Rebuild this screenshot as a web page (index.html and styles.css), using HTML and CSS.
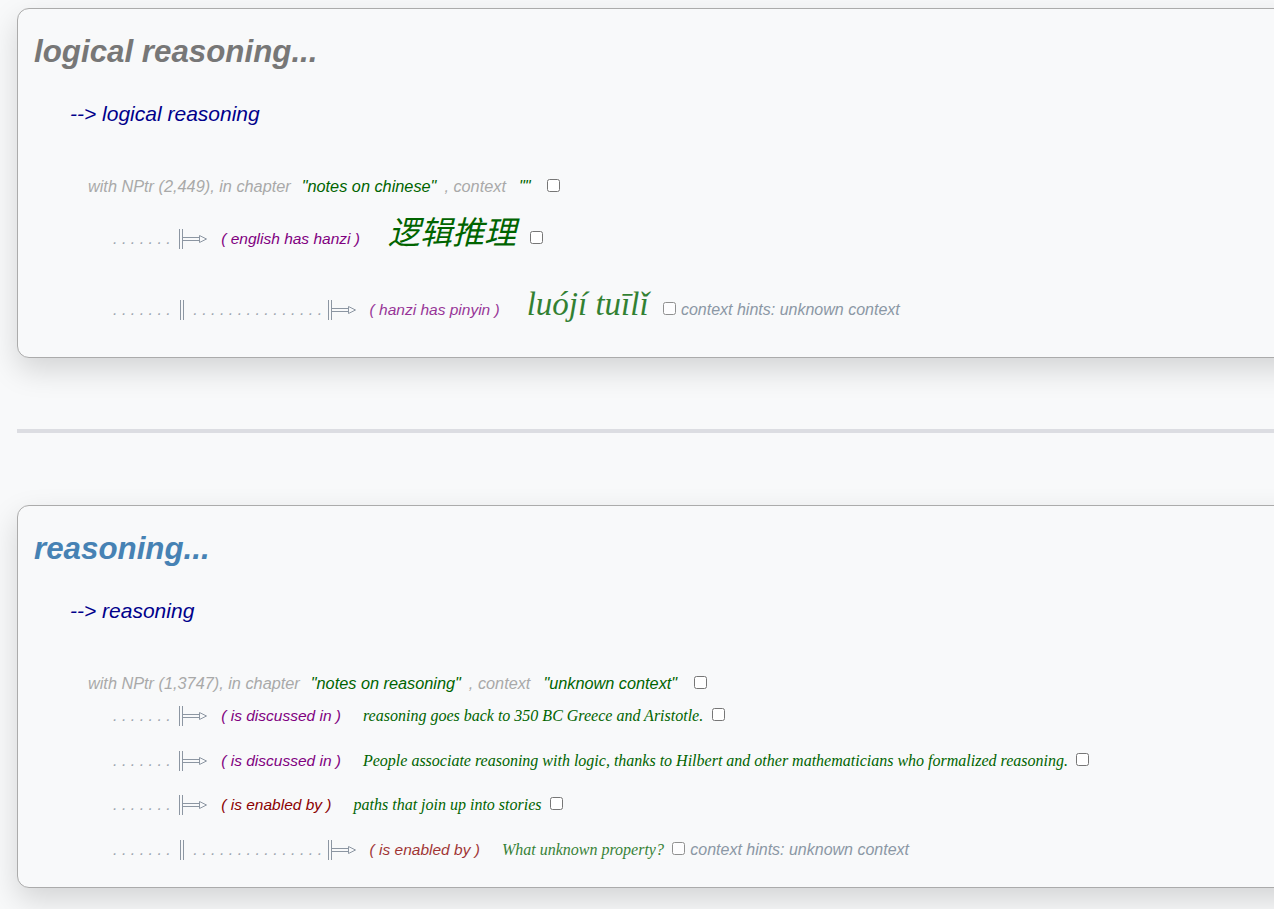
FILE: index.html
```html
<!DOCTYPE html>
<html lang="en">
<head>
<meta charset="utf-8">
<title>reasoning</title>
<link rel="stylesheet" href="styles.css">
</head>
<body>
<main class="page">
  <section class="card">
    <h2 class="title title-gray">logical reasoning...</h2>
    <p class="sub">--&gt; logical reasoning</p>
    <div class="hdr">
      <span class="lbl">with NPtr (2,449), in chapter</span><span class="q">"notes on chinese"</span><span class="lbl ctx">, context</span><span class="q q2">""</span><input type="checkbox" class="cb cb-h">
    </div>
    <div class="row row-cn">
      <span class="dots">. . . . . . . </span><svg class="arr" width="28" height="20" viewBox="0 0 28 20"><path d="M0.5 0V20M3.5 0V20M3.5 8.5H20.5M3.5 11.5H20.5M20.5 6.5L27.5 10L20.5 13.5Z"/></svg><span class="rel purple">( english has hanzi )</span><span class="cn">逻辑推理</span> <input type="checkbox" class="cb">
    </div>
    <div class="row row-py faded">
      <span class="dots">. . . . . . . </span><svg class="bar" width="5" height="20" viewBox="0 0 5 20"><path d="M0.5 0V20M3.5 0V20"/></svg><span class="dots dots2">. . . . . . . . . . . . . . . </span><svg class="arr" width="28" height="20" viewBox="0 0 28 20"><path d="M0.5 0V20M3.5 0V20M3.5 8.5H20.5M3.5 11.5H20.5M20.5 6.5L27.5 10L20.5 13.5Z"/></svg><span class="rel purple">( hanzi has pinyin )</span><span class="py">luójí tuīlǐ</span> <input type="checkbox" class="cb"><span class="hint">context hints: unknown context</span>
    </div>
  </section>

  <hr class="sep">

  <section class="card">
    <h2 class="title title-blue">reasoning...</h2>
    <p class="sub">--&gt; reasoning</p>
    <div class="hdr">
      <span class="lbl">with NPtr (1,3747), in chapter</span><span class="q">"notes on reasoning"</span><span class="lbl ctx">, context</span><span class="q q2">"unknown context"</span><input type="checkbox" class="cb cb-h">
    </div>
    <div class="row row-first">
      <span class="dots">. . . . . . . </span><svg class="arr" width="28" height="20" viewBox="0 0 28 20"><path d="M0.5 0V20M3.5 0V20M3.5 8.5H20.5M3.5 11.5H20.5M20.5 6.5L27.5 10L20.5 13.5Z"/></svg><span class="rel purple">( is discussed in )</span><span class="txt">reasoning goes back to 350 BC Greece and Aristotle.</span> <input type="checkbox" class="cb">
    </div>
    <div class="row">
      <span class="dots">. . . . . . . </span><svg class="arr" width="28" height="20" viewBox="0 0 28 20"><path d="M0.5 0V20M3.5 0V20M3.5 8.5H20.5M3.5 11.5H20.5M20.5 6.5L27.5 10L20.5 13.5Z"/></svg><span class="rel purple">( is discussed in )</span><span class="txt">People associate reasoning with logic, thanks to Hilbert and other mathematicians who formalized reasoning.</span> <input type="checkbox" class="cb">
    </div>
    <div class="row">
      <span class="dots">. . . . . . . </span><svg class="arr" width="28" height="20" viewBox="0 0 28 20"><path d="M0.5 0V20M3.5 0V20M3.5 8.5H20.5M3.5 11.5H20.5M20.5 6.5L27.5 10L20.5 13.5Z"/></svg><span class="rel red">( is enabled by )</span><span class="txt">paths that join up into stories</span> <input type="checkbox" class="cb">
    </div>
    <div class="row faded">
      <span class="dots">. . . . . . . </span><svg class="bar" width="5" height="20" viewBox="0 0 5 20"><path d="M0.5 0V20M3.5 0V20"/></svg><span class="dots dots2">. . . . . . . . . . . . . . . </span><svg class="arr" width="28" height="20" viewBox="0 0 28 20"><path d="M0.5 0V20M3.5 0V20M3.5 8.5H20.5M3.5 11.5H20.5M20.5 6.5L27.5 10L20.5 13.5Z"/></svg><span class="rel red">( is enabled by )</span><span class="txt">What unknown property?</span> <input type="checkbox" class="cb"><span class="hint">context hints: unknown context</span>
    </div>
  </section>
</main>
</body>
</html>
```

FILE: styles.css
```css
html, body {
  margin: 0;
  padding: 0;
  background: #f8f9fa;
  overflow: hidden;
}

body {
  font-family: "Liberation Sans", Arial, sans-serif;
  font-style: italic;
}

.page {
  width: 1320px;
  padding: 8px 0 40px 17px;
}

.card {
  background: #f8f9fa;
  border: 1px solid #ababab;
  border-radius: 12px;
  box-shadow: 0 12px 30px rgba(0, 0, 0, 0.15);
  padding: 25px 0 14px 0;
}

.title {
  margin: 0;
  padding-left: 16px;
  font-size: 31.3px;
  line-height: 36px;
  font-weight: bold;
  font-style: italic;
}

.title-gray { color: #777777; }
.title-blue { color: #4682b4; }

.sub {
  margin: 32px 0 0;
  padding-left: 52px;
  font-size: 21px;
  line-height: 24px;
  color: #00008b;
}

.hdr {
  margin-top: 50px;
  margin-bottom: 1.5px;
  padding-left: 70px;
  font-size: 16.3px;
  line-height: 20px;
  white-space: nowrap;
}

.lbl { color: #a9a9a9; }
.q { color: #006400; margin-left: 11px; }
.q2 { margin-left: 13px; }
.ctx { margin-left: 8px; }

.cb {
  margin: 0 3px 0 4px;
  width: 13px;
  height: 13px;
  vertical-align: 0;
}

.cb-h { margin-left: 17px; }

.row {
  padding-left: 95px;
  font-size: 15.5px;
  line-height: 44.7px;
  white-space: nowrap;
}

.row-first { margin-top: 1px; }

.row > span {
  line-height: 1;
}

.row-cn {
  margin-top: 14.5px;
  line-height: 56px;
}

.row-py {
  margin-top: 10px;
  line-height: 66px;
}

.dots {
  font-size: 16px;
  color: #9ea6b0;
}

.dots2 { margin-left: 8px; }

.arr, .bar {
  vertical-align: -5px;
  fill: none;
  stroke: #8c96a2;
  stroke-width: 1;
}

.bar { margin-left: 5px; }
.arr { margin-left: 4px; }
.dots2 + .arr { margin-left: 1px; }

.rel { margin-left: 14px; }
.purple { color: #800080; }
.red { color: #8b0000; }

.txt {
  margin-left: 22px;
  font-family: "Liberation Serif", "Times New Roman", serif;
  font-size: 16px;
  color: #006400;
}

.cn {
  margin-left: 28px;
  margin-right: 6px;
  font-family: "Noto Sans CJK SC", sans-serif;
  font-size: 32px;
  color: #006400;
}

.py {
  margin-left: 27px;
  margin-right: 6px;
  font-family: "Liberation Serif", "Times New Roman", serif;
  font-size: 33px;
  color: #006400;
}

.faded .rel,
.faded .txt,
.faded .py,
.faded .cb,
.faded .hint {
  opacity: 0.8;
}

.hint {
  margin-left: 2px;
  font-size: 16px;
  color: #708090;
}

.sep {
  margin: 71px 0 72px;
  border: 0;
  height: 4px;
  background: #dcdde2;
}
```
